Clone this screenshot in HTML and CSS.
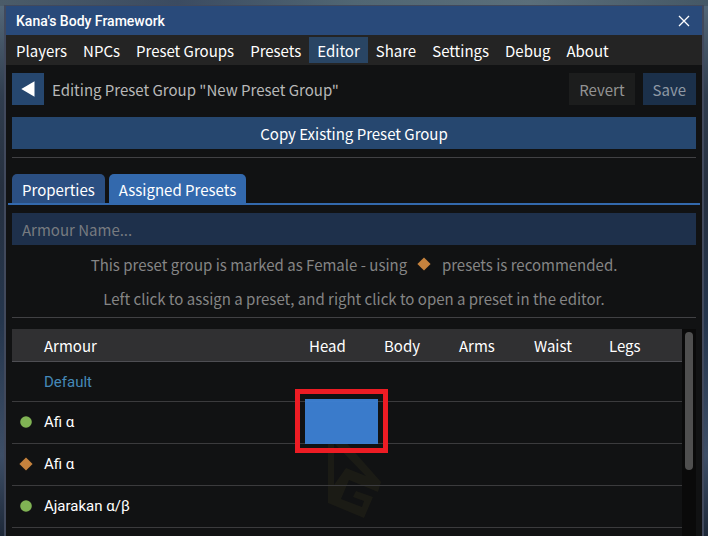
FILE: index.html
```html
<!DOCTYPE html>
<html lang="en">
<head>
<meta charset="utf-8">
<title>Kana's Body Framework</title>
<link rel="stylesheet" href="styles.css">
</head>
<body>
<main class="window">
  <header class="titlebar">
    <h1 class="title">Kana's Body Framework</h1>
    <button class="close" type="button" aria-label="Close">
      <svg width="12" height="12" viewBox="0 0 12 12"><path d="M1 1 L11 11 M11 1 L1 11" stroke="#fff" stroke-width="1.3" fill="none"/></svg>
    </button>
  </header>
  <nav class="menu">
    <a href="#">Players</a>
    <a href="#">NPCs</a>
    <a href="#">Preset Groups</a>
    <a href="#">Presets</a>
    <a href="#" class="current" aria-current="page">Editor</a>
    <a href="#">Share</a>
    <a href="#">Settings</a>
    <a href="#">Debug</a>
    <a href="#">About</a>
  </nav>
  <div class="content">
    <div class="toolbar">
      <button class="btn back" type="button" aria-label="Back">
        <svg width="14" height="16" viewBox="0 0 14 16"><path d="M0.3 8 L13.5 0.3 V15.7 Z" fill="#fff"/></svg>
      </button>
      <span class="heading">Editing Preset Group "New Preset Group"</span>
      <button class="btn revert" type="button" disabled>Revert</button>
      <button class="btn save" type="button" disabled>Save</button>
    </div>
    <button class="btn copy" type="button">Copy Existing Preset Group</button>
    <hr>
    <div class="tabs" role="tablist">
      <button class="tab" type="button" role="tab" aria-selected="false">Properties</button>
      <button class="tab selected" type="button" role="tab" aria-selected="true">Assigned Presets</button>
    </div>
    <input class="search" type="text" placeholder="Armour Name..." aria-label="Armour Name">
    <div class="notes">
      <p>This preset group is marked as Female - using <svg class="inline-mark" width="14" height="14" viewBox="0 0 14 14"><path d="M7 0.4 L13.6 7 L7 13.6 L0.4 7 Z" fill="#c5823d"/></svg> presets is recommended.</p>
      <p>Left click to assign a preset, and right click to open a preset in the editor.</p>
    </div>
    <div class="list">
      <div class="table-area">
        <svg class="emblem" width="56" height="98" viewBox="0 0 56 98">
          <path d="M1 0 L54 60 L51 70 L22 58 L14 77 L35 85 L37 79 L26 75 L29 69 L46 75 L37 96 L1 81 Z M7 21 V63 L19 46 L39 54 Z" fill="#ffe650" fill-opacity="0.045" fill-rule="evenodd"/>
        </svg>
        <table>
          <thead>
            <tr>
              <th class="icon-col"></th><th>Armour</th>
              <th class="slot">Head</th><th class="slot">Body</th><th class="slot">Arms</th><th class="slot">Waist</th><th class="slot last">Legs</th>
            </tr>
          </thead>
          <tbody>
            <tr class="default"><td></td><td>Default</td><td></td><td></td><td></td><td></td><td></td></tr>
            <tr>
              <td class="mark"><svg width="14" height="14" viewBox="0 0 14 14"><circle cx="7" cy="7" r="5.8" fill="#80b354"/></svg></td>
              <td>Afi α</td>
              <td class="picked"><button class="cell" type="button" aria-label="Afi α head preset"></button><span class="frame"></span></td>
              <td></td><td></td><td></td><td></td>
            </tr>
            <tr>
              <td class="mark"><svg width="14" height="14" viewBox="0 0 14 14"><path d="M7 0.4 L13.6 7 L7 13.6 L0.4 7 Z" fill="#c5823d"/></svg></td>
              <td>Afi α</td><td></td><td></td><td></td><td></td><td></td>
            </tr>
            <tr>
              <td class="mark"><svg width="14" height="14" viewBox="0 0 14 14"><circle cx="7" cy="7" r="5.8" fill="#80b354"/></svg></td>
              <td>Ajarakan α/β</td><td></td><td></td><td></td><td></td><td></td>
            </tr>
          </tbody>
        </table>
      </div>
      <div class="track"><div class="thumb"></div></div>
    </div>
  </div>
</main>
</body>
</html>
```
FILE: styles.css
```css
* { box-sizing: border-box; }

body {
  margin: 0;
  height: 100vh;
  padding: 5px 4px 0 4px;
  overflow: hidden;
  background:
    linear-gradient(90deg, #4b5c69 0%, #3b4b61 25%, #506673 50%, #5a6e7a 75%, #455866 100%) top / 100% 6px no-repeat,
    linear-gradient(180deg, #55697a 0%, #303d4e 18%, #26303f 35%, #25364d 60%, #3d4e66 85%, #1d2838 100%);
  font-family: "Noto Sans CJK JP", "Noto Sans", sans-serif;
  font-size: 15px;
  line-height: 24px;
  color: #fff;
}

button, input {
  font: inherit;
  color: inherit;
  border: 0;
  border-radius: 0;
  padding: 0;
}

.window {
  height: 100%;
  display: flex;
  flex-direction: column;
  border: 1px solid #41495c;
  border-width: 1px 2px 0;
  background: #111213;
}

.titlebar {
  display: flex;
  align-items: center;
  justify-content: space-between;
  height: 29px;
  flex: none;
  padding: 0 12px 0 10px;
  background: #294a7a;
}

.title {
  margin: 0;
  font: 500 14px/16px Roboto, sans-serif;
}

.close {
  display: flex;
  background: none;
}

.menu {
  display: flex;
  flex: none;
  padding: 2px;
  background: #242424;
}

.menu a {
  height: 26px;
  padding: 2px 8px 0;
  line-height: 24px;
  color: inherit;
  text-decoration: none;
}

.menu .current { background: #294564; }

.content {
  display: flex;
  flex: 1;
  flex-direction: column;
  min-height: 0;
  padding: 8px 6px 0;
}

.toolbar {
  display: flex;
  gap: 8px;
  margin-bottom: 12px;
}

.btn {
  height: 32px;
  padding: 2px 10px 0;
  background: #26476f;
}

.back {
  display: flex;
  align-items: center;
  justify-content: center;
  width: 32px;
  padding: 0;
}

.heading {
  flex: 1;
  padding-top: 2px;
  line-height: 30px;
  color: #b8b8b8;
}

.revert { background: #1c1d1d; color: #939393; }
.save { background: #1b304a; color: #8f99a5; }

hr {
  width: 100%;
  height: 1px;
  margin: 8px 0 0;
  border: 0;
  flex: none;
  background: #414144;
}

.tabs {
  display: flex;
  gap: 4px;
  margin: 16px -4px 8px;
  padding: 0 4px;
  border-bottom: 2px solid #3369ad;
}

.tab {
  height: 29px;
  padding: 2px 10px 0;
  border-radius: 5px 5px 0 0;
  background: #2b4f82;
}

.tab.selected { background: #3369ad; }

.search {
  width: 100%;
  height: 32px;
  flex: none;
  padding: 0 10px;
  background: #1e304b;
}

.search::placeholder { color: #777b80; opacity: 1; }

.notes {
  display: grid;
  grid-auto-rows: 24px;
  gap: 10px;
  padding: 8px 0 6px;
  border-bottom: 1px solid #414144;
  text-align: center;
  color: #858585;
}

.notes p { margin: 0; }

.inline-mark { margin: 0 8px 0 6px; }

.list {
  display: flex;
  flex: 1;
  min-height: 0;
  margin-top: 11px;
}

.table-area {
  position: relative;
  flex: 1;
  overflow: hidden;
}

.emblem {
  position: absolute;
  top: 93px;
  left: 315px;
}

table {
  position: relative;
  width: 100%;
  table-layout: fixed;
  border-collapse: separate;
  border-spacing: 0;
}

th, td {
  padding: 0 4px;
  text-align: left;
  border-bottom: 1px solid #3b3b3d;
}

th {
  height: 33px;
  padding-top: 2px;
  background: #303032;
  border-bottom-color: #4e4e53;
  font-weight: 400;
}

td {
  height: 42px;
  padding-bottom: 2px;
  font-family: Roboto, sans-serif;
  font-size: 15px;
  line-height: 20px;
}

.icon-col { width: 28px; }
.slot { width: 75px; }
.last { width: 77px; }

.default td { height: 40px; padding-bottom: 0; color: #4589b8; }

.mark { padding-left: 7px; }
.mark svg { display: block; }

.picked { position: relative; }

.cell {
  position: absolute;
  inset: -3px 2px -1px 0;
  background: rgba(61, 130, 215, 0.94);
}

.frame {
  position: absolute;
  inset: -13px -8px -10px -10px;
  border: 5px solid #ed1c24;
  pointer-events: none;
}

.track {
  width: 14px;
  padding: 3px;
  background: #0a0a0a;
}

.thumb {
  height: 138px;
  border-radius: 4px;
  background: #4f4f4f;
}
```
